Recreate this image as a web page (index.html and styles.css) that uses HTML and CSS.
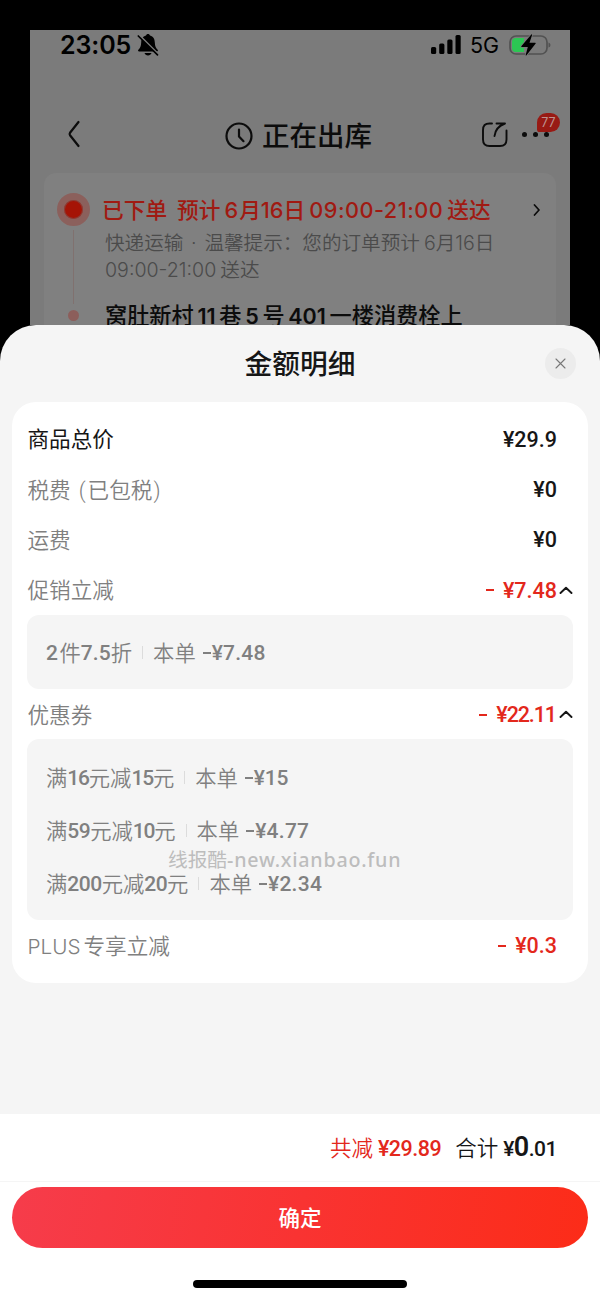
FILE: index.html
```html
<!DOCTYPE html>
<html lang="zh-CN">
<head>
<meta charset="utf-8">
<title>金额明细</title>
<link rel="stylesheet" href="styles.css">
</head>
<body>
<main class="screen">
  <section class="order">
    <div class="status">
      <span class="time">23:05</span>
      <svg class="bell" width="22" height="24" viewBox="0 0 22 24">
        <path d="M11 1c-1 0-1.800.7-2 1.600C5.600 3.500 4.300 6.200 4.200 9.500c-.1 4-1.200 5.700-2.800 7.300-.7.800-.3 1.700.8 1.700h17.600c1.100 0 1.500-.9.8-1.700-1.600-1.600-2.700-3.300-2.800-7.300-.1-3.300-1.400-6-4.800-6.900C12.800 1.700 12 1 11 1zM7.500 20h7c-.5 1.500-1.800 2.400-3.500 2.400S8 21.500 7.500 20z"/>
        <path class="bell-gap" d="M2.200 2.200L21 21"/>
        <path class="bell-line" d="M1.300 3L20.500 21.800"/>
      </svg>
      <svg class="signal" width="30" height="20" viewBox="0 0 30 20">
        <rect x="0" y="12" width="5.200" height="7" rx="1.500"/><rect x="8.200" y="8.500" width="5.200" height="10.500" rx="1.500"/><rect x="16.300" y="4.500" width="5.200" height="14.500" rx="1.500"/><rect x="24.500" y="0" width="5.200" height="19" rx="1.500"/>
      </svg>
      <span class="net">5G</span>
      <svg class="battery" width="42" height="24" viewBox="0 0 42 24">
        <rect class="batt-box" x="1" y="3" width="37" height="18" rx="6"/>
        <path class="batt-fill" d="M7 5h8v14H7q-4 0-4-4V9q0-4 4-4z"/>
        <path class="batt-cap" d="M39.500 9.500q2 .5 2 2.500t-2 2.500z"/>
        <path class="bolt" d="M22.300 1.500L12.300 13.200q-.3.700.5.700h6L16.700 22q-.1 1 .8.300l9.200-11.700q.3-.8-.6-.8h-5.600l2.600-7.700q0-1.100-.8-.6z"/>
      </svg>
    </div>
    <div class="nav">
      <svg class="back" width="14" height="28" viewBox="0 0 14 28"><path d="M11.500 2L3 12.800q-.8 1.200 0 2.400L11.500 26"/></svg>
      <svg class="clock" width="28" height="28" viewBox="0 0 28 28"><circle cx="14" cy="14" r="12.500"/><path d="M14 7.500v7l4.500 4.700"/></svg>
      <h1 class="nav-title">正在出库</h1>
      <svg class="share" width="28" height="26" viewBox="0 0 28 26"><path d="M11 1.500H8.500q-6.500 0-6.500 6.500V17.500q0 6.500 6.500 6.500h10.500q6.500 0 6.500-6.500V8.500M15.500 1.500h8.500Q14.500 5 13.500 14"/></svg>
      <div class="more"><i></i><i></i><i></i><span class="badge">77</span></div>
    </div>
    <div class="progress">
      <div class="track"><span class="dot-now"></span><span class="line"></span><span class="dot-next"></span></div>
      <div class="steps">
        <div class="step-title"><span>已下单</span><span class="est">预计</span><b class="n">6</b><span class="m">月</span><b>16</b><span>日</span><b class="clock-range">09:00-21:00</b><span class="n">送达</span>
          <svg class="go" width="8" height="12" viewBox="0 0 8 12"><path d="M1.500 1L6 6l-4.500 5"/></svg>
        </div>
        <p class="tip">快递运输<span class="mid">·</span>温馨提示：您的订单预计<span class="ns">6</span>月<span>16</span>日</p>
        <p class="tip">09:00-21:00<span class="ns">送达</span></p>
        <p class="address">窝肚新村<b>11</b>巷<b>5</b>号<b>401</b>一楼消费栓上</p>
      </div>
    </div>
  </section>

  <section class="sheet">
    <header class="sheet-head">
      <h2>金额明细</h2>
      <button class="close" aria-label="关闭"><svg width="11" height="11" viewBox="0 0 11 11"><path d="M1 1l9 9M10 1l-9 9"/></svg></button>
    </header>
    <div class="card">
      <div class="row dark"><span class="label">商品总价</span><b class="amount">¥29.9</b></div>
      <div class="row"><span class="label">税费<span class="paren">(</span>已包税<span class="paren-end">)</span></span><b class="amount">¥0</b></div>
      <div class="row"><span class="label">运费</span><b class="amount">¥0</b></div>
      <div class="row open"><span class="label">促销立减</span><b class="amount cut"><i class="minus"></i>¥7.48</b><svg class="up" width="14" height="8" viewBox="0 0 14 8"><path d="M1.500 7L7 1.800 12.500 7"/></svg></div>
      <div class="detail">
        <p><b>2</b><span class="piece">件</span><b class="rate">7.5</b><span>折</span><i class="bar"></i><span>本单</span><b class="off"><i class="dash"></i>¥7.48</b></p>
      </div>
      <div class="row open"><span class="label">优惠券</span><b class="amount cut tight"><i class="minus"></i>¥22.11</b><svg class="up" width="14" height="8" viewBox="0 0 14 8"><path d="M1.500 7L7 1.800 12.500 7"/></svg></div>
      <div class="detail coupons">
        <p><span>满</span><b class="narrow">16</b><span>元减</span><b class="narrow">15</b><span>元</span><i class="bar"></i><span>本单</span><b class="off off-short"><i class="dash"></i>¥15</b></p>
        <p><span>满</span><b>59</b><span>元减</span><b class="narrow">10</b><span>元</span><i class="bar"></i><span>本单</span><b class="off"><i class="dash"></i>¥4.77</b></p>
        <p><span>满</span><b>200</b><span>元减</span><b>20</b><span>元</span><i class="bar"></i><span>本单</span><b class="off"><i class="dash"></i>¥2.34</b></p>
        <div class="watermark">线报酷<span>-new.xianbao.fun</span></div>
      </div>
      <div class="row"><span class="label"><span class="plus">PLUS</span>专享立减</span><b class="amount cut"><i class="minus"></i>¥0.3</b></div>
    </div>
    <footer class="foot">
      <div class="total"><span class="saved">共减<b>¥29.89</b></span><span class="sum">合计<b>¥<em>0</em>.01</b></span></div>
      <button class="confirm">确定</button>
      <div class="home"></div>
    </footer>
  </section>
</main>
</body>
</html>
```
FILE: styles.css
```css
* { box-sizing: border-box; margin: 0; padding: 0; }
body { background: #000; font-family: Roboto, "Noto Sans CJK SC", sans-serif; }
svg { display: block; flex: none; fill: none; stroke-linecap: round; stroke-linejoin: round; }
i, em { font-style: normal; }
b { font-weight: 500; }
button { border: 0; font-family: inherit; }
p { white-space: nowrap; }

.screen { width: 600px; height: 1300px; overflow: hidden; padding-top: 30px; display: flex; flex-direction: column; }

/* Dimmed order page */
.order { flex: none; width: 540px; height: 295px; margin: 0 30px; background: #7b7b7b; color: #0c0c0c; }
.status { height: 30px; padding: 0 19px 0 30px; display: flex; align-items: center; font-family: Inter, sans-serif; color: #000; }
.time { width: 72px; font-size: 25px; font-weight: 600; letter-spacing: -0.1px; }
.bell { margin-left: 5px; fill: #000; }
.bell-gap { stroke: #7b7b7b; stroke-width: 2; }
.bell-line { stroke: #000; stroke-width: 1.700; }
.signal { margin-left: auto; fill: #000; }
.net { margin: 0 11px 0 9px; width: 28px; font-size: 21.500px; font-weight: 400; }
.battery { margin-top: -1px; }
.batt-box { stroke: #525252; stroke-width: 1.700; }
.batt-fill { fill: #2cc653; }
.batt-cap { fill: #525252; }
.bolt { fill: #000; stroke: #7b7b7b; stroke-width: 1.500; paint-order: stroke; }

.nav { height: 113px; padding: 60px 19px 0 37px; display: flex; align-items: flex-start; }
.nav svg { stroke: #0c0c0c; stroke-width: 2.200; }
.clock { margin: 2px 0 0 144px; }
.nav-title { margin: -3px 0 0 9px; width: 112px; font-size: 27.500px; line-height: 40px; font-weight: 500; white-space: nowrap; }
.nav .share { margin: 2px 0 0 107px; stroke-width: 1.900; }
.more { position: relative; display: flex; gap: 6px; margin: 12px 0 0 13px; }
.more i { width: 5px; height: 5px; border-radius: 50%; background: #0c0c0c; }
.badge { position: absolute; left: 15px; top: -19px; width: 23px; height: 19px; border-radius: 10px 10px 10px 3px; background: #981a14; color: #bd9390; font-family: Inter, sans-serif; font-size: 12.500px; line-height: 19px; text-align: center; }

.progress { width: 512px; height: 152px; margin-left: 14px; border-radius: 12px 12px 0 0; background: #808080; display: flex; overflow: hidden; }
.track { width: 60px; display: flex; flex-direction: column; align-items: center; padding: 20px 1px 0 0; }
.dot-now { width: 33px; height: 33px; flex: none; border-radius: 50%; background: #a51406; border: 7px solid #8b605c; box-shadow: inset 0 0 0 1px #8b3d37; }
.line { width: 1px; height: 74px; margin: 4px 0 6px; background: #80716f; }
.dot-next { width: 11px; height: 11px; flex: none; border-radius: 50%; background: #8c5e5b; }
.steps { flex: 1; padding-top: 17px; }
.step-title { height: 38px; margin-left: -2px; display: flex; align-items: center; padding: 0 15px 0 0; color: #a01a12; font-weight: 500; font-size: 21.700px; white-space: nowrap; }
.step-title span { padding-bottom: 1px; }
.step-title b { font-family: Inter, sans-serif; font-weight: 500; padding-top: 1px; }
.est { margin-left: 10px; }
.n { margin-left: 4px; }
.m { margin-left: 1px; }
.clock-range { margin-left: 4px; letter-spacing: .5px; }
.go { margin: 2px 0 0 auto; stroke: #0c0c0c; stroke-width: 1.700; }
.tip { font-family: Inter, "Noto Sans CJK SC", sans-serif; padding-left: 1px; font-size: 19.600px; line-height: 27px; color: #4b4b4b; font-weight: 350; position: relative; top: 2px; }
.mid { display: inline-block; width: 21px; text-align: center; }
.ns { margin-left: 4px; }
.address { padding-left: 1px; margin-top: 15px; font-size: 22.200px; line-height: 38px; font-weight: 500; }
.address b { font-family: Inter, sans-serif; font-weight: 600; margin: 0 3.700px; font-size: 21.500px; }

/* Price sheet */
.sheet { flex: 1; min-height: 0; background: #f5f5f5; border-radius: 36px 36px 0 0; display: flex; flex-direction: column; }
.sheet-head { position: relative; height: 76.500px; display: flex; align-items: center; justify-content: center; flex: none; color: #161616; }
.sheet-head h2 { font-size: 27.700px; font-weight: 500; padding-bottom: 2px; }
.close { position: absolute; right: 24px; top: 23px; width: 31px; height: 31px; border-radius: 50%; background: #ececec; display: grid; place-items: center; }
.close svg { stroke: #777; stroke-width: 1.100; }
.card { flex: none; margin: 0 12px; height: 581px; border-radius: 24px; background: #fff; padding: 12px 15px 0 16px; }
.row { height: 50.400px; padding-right: 16px; display: flex; align-items: center; justify-content: space-between; font-size: 21.600px; font-weight: 350; color: #808080; }
.label { padding-bottom: 2px; margin-left: -.5px; }
.dark { color: #161616; font-weight: 400; }
.amount { display: flex; align-items: center; padding-top: 1px; font-size: 21.500px; color: #161616; }
.cut { color: #e3281c; }
.tight { letter-spacing: -1.100px; }
.tight + .up { margin-left: 3px; }
.minus { width: 8px; height: 2px; margin-right: 9px; background: currentColor; }
.paren { margin: 0 2px 0 8px; }
.paren-end { margin-left: 1px; }
.open { padding-right: 0; }
.open .amount { margin-left: auto; }
.up { margin-left: 2px; stroke: #161616; stroke-width: 1.900; }
.detail { position: relative; height: 74px; margin-left: -1px; border-radius: 12px; background: #f5f5f5; padding: 11px 19px; color: #808080; font-size: 21.300px; font-weight: 350; }
.detail p { height: 53px; display: flex; align-items: center; }
.detail p span { padding-bottom: 2px; }
.coupons { height: 180.500px; padding-top: 12px; }
.detail b { font-size: 21px; letter-spacing: -.5px; }
.detail b.narrow { letter-spacing: -1.200px; }
.detail b.off { letter-spacing: .25px; }
.detail b.off-short { letter-spacing: -.2px; }
.detail b.rate { letter-spacing: .1px; }
.piece { margin-left: 2px; }
.bar { width: 1px; height: 13px; margin: 0 10px; background: #dcdcdc; }
.off { margin-left: 7px; display: flex; align-items: center; }
.dash { width: 8px; height: 2px; margin-right: 1px; background: currentColor; }
.watermark { position: absolute; left: 141px; top: 106px; font-family: "Noto Sans CJK SC", sans-serif; font-size: 19.700px; line-height: 27px; font-weight: 400; color: #bdbdbd; white-space: nowrap; }
.watermark span { font-family: "Noto Sans", sans-serif; font-weight: 500; letter-spacing: .75px; }
.plus { font-family: Inter, sans-serif; font-size: 20.700px; margin-right: 3px; }

.foot { margin-top: auto; flex: none; height: 186.500px; background: #fff; }
.total { height: 68px; padding-right: 43px; border-bottom: 1px solid #f5f5f5; display: flex; align-items: baseline; padding-top: 17px; line-height: 32px; justify-content: flex-end; font-size: 21.500px; font-weight: 350; gap: 14px; color: #161616; }
.total b { margin-left: 5px; letter-spacing: -.5px; }
.saved { color: #e3281c; }
.sum b { font-size: 21px; }
.sum em { font-size: 27px; font-weight: 600; }
.confirm { display: block; width: 576px; height: 61px; margin: 5.500px 12px 0; padding-bottom: 2px; border-radius: 31px; background: linear-gradient(100deg, #f63c4b, #f93332 50%, #fc2c18); color: #fff; font-size: 21.500px; font-weight: 500; }
.home { width: 214px; height: 8px; margin: 32px auto 0; border-radius: 4px; background: #000; }
```
